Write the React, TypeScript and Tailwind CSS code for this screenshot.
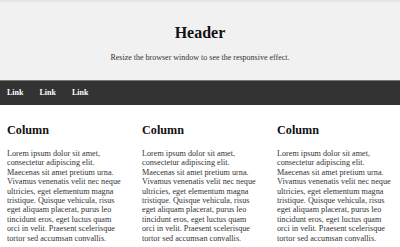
const LOREM =
  "Lorem ipsum dolor sit amet, consectetur adipiscing elit. Maecenas sit amet pretium urna. Vivamus venenatis velit nec neque ultricies, eget elementum magna tristique. Quisque vehicula, risus eget aliquam placerat, purus leo tincidunt eros, eget luctus quam orci in velit. Praesent scelerisque tortor sed accumsan convallis.";

function Column() {
  return (
    <div className="pl-[7px] pr-[10px] pt-[18px]">
      <h2 className="text-[12.2px] leading-[14px] font-bold text-[#111]">Column</h2>
      <p className="mt-[12px] text-[8.2px] leading-[9.4px] text-[#333]">{LOREM}</p>
    </div>
  );
}

export default function App() {
  return (
    <div
      className="w-[400px] h-[247px] overflow-hidden bg-white"
      style={{ fontFamily: '"Liberation Serif", "Times New Roman", serif' }}
    >
      <div className="h-[2px] bg-[#e4e4e4]" />
      <header className="bg-[#f1f1f1] h-[78px] pt-[22px] text-center">
        <h1 className="text-[16px] leading-[18px] font-bold text-[#111]">Header</h1>
        <p className="mt-[11px] text-[8px] leading-[9px] text-[#333]">
          Resize the browser window to see the responsive effect.
        </p>
      </header>
      <nav className="flex h-[25px] bg-[#333] border-t border-[#777]">
        {["Link", "Link", "Link"].map((l, i) => (
          <a
            key={i}
            href="#"
            className="flex items-center px-[8px] first:pl-[7px] text-[8px] font-bold text-white"
          >
            {l}
          </a>
        ))}
      </nav>
      <div className="grid grid-cols-[135px_135px_135px]">
        <Column />
        <Column />
        <Column />
      </div>
    </div>
  );
}
